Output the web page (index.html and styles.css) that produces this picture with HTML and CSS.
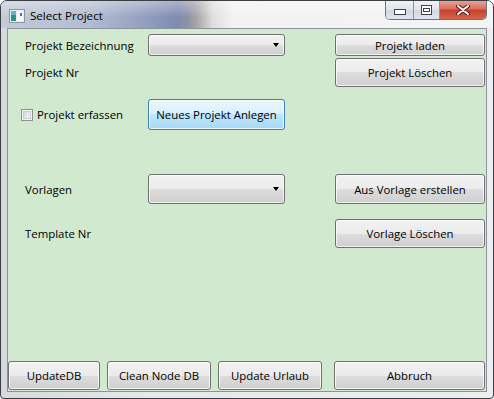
FILE: index.html
```html
<!doctype html>
<html lang="de">
  <head>
    <meta charset="UTF-8" />
    <title>Select Project</title>
    <link rel="stylesheet" href="styles.css">
  </head>
  <body>
    <div class="window">
      <div class="titlebar">
        <svg class="app-icon" width="16" height="14" viewBox="0 0 16 14">
          <rect x="0.5" y="0.5" width="15" height="13" fill="#e9edf1" stroke="#8a96a6" />
          <rect x="2" y="2" width="5" height="10" fill="#2f8f86" />
          <rect x="2" y="2" width="5" height="4" fill="#5fb5c9" />
          <rect x="8" y="2" width="6" height="10" fill="#f6f8fa" />
          <rect x="11" y="4" width="2" height="3" fill="#3d6fb7" />
        </svg>
        <span class="title">Select Project</span>
        <div class="caption-buttons">
          <div class="cap cap-min">
            <svg width="12" height="6" viewBox="0 0 12 6">
              <rect x="0.5" y="0.5" width="11" height="5" fill="#fff" stroke="#3b4250" />
            </svg>
          </div>
          <div class="cap cap-max">
            <svg width="11" height="10" viewBox="0 0 11 10">
              <rect x="0.5" y="0.5" width="10" height="9" fill="#fff" stroke="#3b4250" />
              <rect x="2.5" y="3.5" width="6" height="3" fill="none" stroke="#3b4250" />
            </svg>
          </div>
          <div class="cap cap-close">
            <svg width="14" height="10" viewBox="0 0 14 10">
              <path d="M2 1 L12 9 M12 1 L2 9" stroke="#5a1a14" stroke-width="4" stroke-linecap="round" />
              <path d="M2 1 L12 9 M12 1 L2 9" stroke="#fff" stroke-width="2" stroke-linecap="round" />
            </svg>
          </div>
        </div>
      </div>

      <div class="frame">
        <div class="client">
          <div class="row row-name">
            <span class="label">Projekt Bezeichnung</span>
            <div class="combo"><span class="arrow"></span></div>
            <button class="btn side-btn">Projekt laden</button>
          </div>

          <div class="row row-nr">
            <span class="label">Projekt Nr</span>
            <button class="btn side-btn">Projekt Löschen</button>
          </div>

          <div class="row row-new">
            <label class="check">
              <span class="box"></span>
              Projekt erfassen
            </label>
            <button class="btn btn-default">Neues Projekt Anlegen</button>
          </div>

          <div class="row row-templates">
            <span class="label">Vorlagen</span>
            <div class="combo"><span class="arrow"></span></div>
            <button class="btn side-btn">Aus Vorlage erstellen</button>
          </div>

          <div class="row row-template-nr">
            <span class="label">Template Nr</span>
            <button class="btn side-btn">Vorlage Löschen</button>
          </div>

          <div class="spacer"></div>

          <div class="bottom-bar">
            <button class="btn b-update">UpdateDB</button>
            <button class="btn b-clean">Clean Node DB</button>
            <button class="btn b-urlaub">Update Urlaub</button>
            <button class="btn b-cancel">Abbruch</button>
          </div>
        </div>
      </div>
    </div>
  </body>
</html>
```

FILE: styles.css
```css
body {
  margin: 0;
  background: #ffffff;
  font-family: "Open Sans", "Noto Sans", sans-serif;
  font-size: 11.4px;
  color: #000;
}
.window {
  width: 494px;
  height: 399px;
  box-sizing: border-box;
  border: 1px solid #3a3d42;
  border-radius: 7px 7px 4px 4px;
  overflow: hidden;
  display: flex;
  flex-direction: column;
  background: linear-gradient(to right, #d6d9de 0%, #e6e8eb 30%, #eceeef 100%);
}
.titlebar {
  height: 27px;
  flex: none;
  display: flex;
  align-items: center;
  padding-left: 8px;
  background:
    linear-gradient(to bottom, rgba(255, 255, 255, 0.35), rgba(255, 255, 255, 0) 60%),
    linear-gradient(to right, #c4cbd8 0%, #b3bcd0 18%, #96a2c0 28%, #7f8bb0 36%, #8e93a8 38%, #a9a9a9 40%, #dedede 43%, #f2f2f2 47%, #f4f4f4 100%);
}
.app-icon {
  flex: none;
  margin-top: 2px;
}
.title {
  margin-left: 5px;
  margin-top: 2px;
  font-size: 11.6px;
  color: #000;
}
.caption-buttons {
  margin-left: auto;
  margin-right: 6px;
  align-self: flex-start;
  margin-top: -1px;
  display: flex;
  height: 19px;
  border: 1px solid #6b7380;
  border-top: none;
  border-radius: 0 0 5px 5px;
  overflow: hidden;
}
.cap {
  display: flex;
  align-items: center;
  justify-content: center;
  height: 19px;
  background: linear-gradient(to bottom, #f1f3f6 0%, #dfe4eb 50%, #cfd6e0 51%, #e0e6ee 100%);
}
.cap-min {
  width: 27px;
  border-right: 1px solid #8c94a0;
}
.cap-min svg {
  margin-top: 5px;
}
.cap-max {
  width: 25px;
  border-right: 1px solid #8c94a0;
}
.cap-close {
  width: 46px;
  background: linear-gradient(to bottom, #e9a99b 0%, #d9715f 45%, #c5432f 55%, #d4654c 100%);
}
.frame {
  flex: 1;
  padding: 0 6px 6px;
  display: flex;
}
.client {
  flex: 1;
  border: 1px solid #8b929b;
  background: #d0e9cf;
  display: flex;
  flex-direction: column;
}
.row {
  display: grid;
  grid-template-columns: 140px 137px 50px 150px;
  align-items: center;
}
.row-name {
  height: 22px;
  margin-top: 5px;
}
.row-nr {
  height: 29px;
  margin-top: 2px;
}
.row-new {
  height: 31px;
  margin-top: 12px;
}
.row-templates {
  height: 30px;
  margin-top: 44px;
}
.row-template-nr {
  height: 29px;
  margin-top: 15px;
}
.label {
  grid-column: 1;
  padding-left: 17px;
  white-space: nowrap;
}
.side-btn {
  grid-column: 4;
}
.combo {
  grid-column: 2;
  height: 100%;
  box-sizing: border-box;
  border: 1px solid #707070;
  border-radius: 3px;
  background: linear-gradient(to bottom, #f2f2f2 0%, #ebebeb 50%, #dddddd 50%, #cfcfcf 100%);
  box-shadow: inset 0 0 0 1px rgba(255, 255, 255, 0.7);
  display: flex;
  align-items: center;
  justify-content: flex-end;
  padding-right: 5px;
}
.arrow {
  width: 0;
  height: 0;
  border-left: 3.5px solid transparent;
  border-right: 3.5px solid transparent;
  border-top: 4px solid #000;
}
.check {
  grid-column: 1;
  padding-left: 13px;
  display: flex;
  align-items: center;
  gap: 4px;
  white-space: nowrap;
}
.box {
  width: 12px;
  height: 12px;
  box-sizing: border-box;
  border: 1px solid #8e8f8f;
  background: linear-gradient(135deg, #cbcfd5 0%, #eef0f2 70%, #f6f6f6 100%);
  box-shadow: inset 0 0 0 1px #f4f4f4, inset 0 0 0 2px #c9ccd1;
}
.btn {
  height: 100%;
  box-sizing: border-box;
  font-family: inherit;
  font-size: 11.4px;
  color: #000;
  padding: 0;
  border: 1px solid #707070;
  border-radius: 3px;
  background: linear-gradient(to bottom, #f2f2f2 0%, #ebebeb 50%, #dddddd 50%, #cfcfcf 100%);
  box-shadow: inset 0 0 0 1px rgba(255, 255, 255, 0.75);
}
.btn-default {
  grid-column: 2;
  border-color: #3c7fb1;
  background: linear-gradient(to bottom, #eaf6fd 0%, #d9f0fc 50%, #bee6fd 50%, #a7d9f5 100%);
}
.spacer {
  flex: 1;
}
.bottom-bar {
  height: 29px;
  margin-bottom: 1px;
  display: flex;
}
.b-update {
  width: 92px;
}
.b-clean {
  width: 104px;
  margin-left: 7px;
}
.b-urlaub {
  width: 104px;
  margin-left: 7px;
}
.b-cancel {
  width: 151px;
  margin-left: 12px;
}
```
